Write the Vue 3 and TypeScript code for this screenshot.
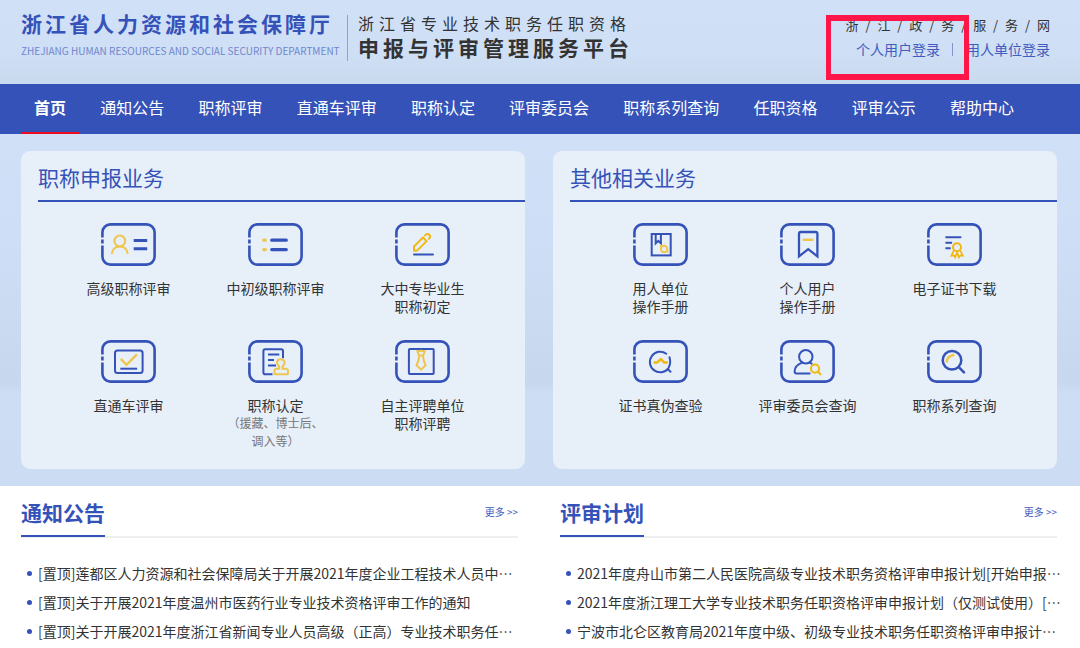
<script setup lang="ts">
interface Service {
  id: string
  lines: string[]
  note?: string[]
}
interface Panel {
  title: string
  services: Service[]
}
interface Board {
  title: string
  items: string[]
}

const navItems: string[] = [
  '首页', '通知公告', '职称评审', '直通车评审', '职称认定',
  '评审委员会', '职称系列查询', '任职资格', '评审公示', '帮助中心',
]

const panels: Panel[] = [
  {
    title: '职称申报业务',
    services: [
      { id: 'senior', lines: ['高级职称评审'] },
      { id: 'junior', lines: ['中初级职称评审'] },
      { id: 'graduate', lines: ['大中专毕业生', '职称初定'] },
      { id: 'direct', lines: ['直通车评审'] },
      { id: 'confirm', lines: ['职称认定'], note: ['（援藏、博士后、', '调入等）'] },
      { id: 'employer', lines: ['自主评聘单位', '职称评聘'] },
    ],
  },
  {
    title: '其他相关业务',
    services: [
      { id: 'unit-manual', lines: ['用人单位', '操作手册'] },
      { id: 'user-manual', lines: ['个人用户', '操作手册'] },
      { id: 'certificate', lines: ['电子证书下载'] },
      { id: 'verify', lines: ['证书真伪查验'] },
      { id: 'committee', lines: ['评审委员会查询'] },
      { id: 'series', lines: ['职称系列查询'] },
    ],
  },
]

const boards: Board[] = [
  {
    title: '通知公告',
    items: [
      '[置顶]莲都区人力资源和社会保障局关于开展2021年度企业工程技术人员中…',
      '[置顶]关于开展2021年度温州市医药行业专业技术资格评审工作的通知',
      '[置顶]关于开展2021年度浙江省新闻专业人员高级（正高）专业技术职务任…',
    ],
  },
  {
    title: '评审计划',
    items: [
      '2021年度舟山市第二人民医院高级专业技术职务资格评审申报计划[开始申报…',
      '2021年度浙江理工大学专业技术职务任职资格评审申报计划（仅测试使用）[…',
      '宁波市北仑区教育局2021年度中级、初级专业技术职务任职资格评审申报计…',
    ],
  },
]
</script>

<template>
  <div class="page">
    <header class="header">
      <div class="brand">
        <div class="dept">
          <p class="dept-name">浙江省人力资源和社会保障厅</p>
          <p class="dept-en">ZHEJIANG HUMAN RESOURCES AND SOCIAL SECURITY DEPARTMENT</p>
        </div>
        <div class="platform">
          <p class="platform-sub">浙江省专业技术职务任职资格</p>
          <h1 class="platform-name">申报与评审管理服务平台</h1>
        </div>
      </div>
      <div class="account">
        <a class="gov" href="#">浙 / 江 / 政 / 务 / 服 / 务 / 网</a>
        <div class="logins">
          <a href="#">个人用户登录</a>
          <span class="sep"></span>
          <a href="#">用人单位登录</a>
        </div>
      </div>
      <div class="highlight"></div>
    </header>

    <nav class="nav">
      <a v-for="(item, i) in navItems" :key="item" href="#" class="nav-link" :class="{ active: i === 0 }">{{ item }}</a>
    </nav>

    <main>
      <div class="hero">
        <section v-for="panel in panels" :key="panel.title" class="panel">
          <h2 class="panel-title">{{ panel.title }}</h2>
          <div class="services">
            <a v-for="s in panel.services" :key="s.id" href="#" class="service">
              <svg class="icon" viewBox="0 0 55 43" aria-hidden="true">
                <path class="frame" d="M1.4 14.6V9.4a8 8 0 0 1 8-8h36.2a8 8 0 0 1 8 8v24.2a8 8 0 0 1-8 8H9.4a8 8 0 0 1-8-8V22.4M1.4 16.4v4" />
                <g v-if="s.id === 'senior'">
                  <g class="y pale"><circle cx="18.8" cy="18" r="5.4" /><path d="M10.8 31c.4-4.5 3.5-7.6 8-7.6s7.6 3.1 8 7.6" /></g>
                  <path class="b" stroke-width="3" d="M32.7 17.4h13.5M32.7 25.7h13.5" />
                </g>
                <g v-else-if="s.id === 'junior'" class="round">
                  <path class="y pale" stroke-width="3.2" d="M15.7 17.2h1.6M15.7 26.6h1.6" />
                  <path class="b" stroke-width="3.2" d="M23.7 17.2h14.6M23.7 26.6h14.6" />
                </g>
                <g v-else-if="s.id === 'graduate'" class="round">
                  <path class="y" d="M19 27.7v-4.2l9-9 3.6 3.6-8.8 8.8q-1.2 1-3.8.8zM30 12.4c1.6-1.8 3.2-1.7 4.3-.6s1.1 2.6-.4 4.1" />
                  <path class="b" d="M19 31.6h19" />
                </g>
                <g v-else-if="s.id === 'direct'">
                  <rect class="b" x="14" y="10.6" width="27.6" height="22.4" rx="2.5" />
                  <path class="y pale" stroke-width="2.4" d="M19.8 18.8l5.7 6 10.5-10.4" />
                  <path class="b" d="M19.3 28.7h16.8" />
                </g>
                <g v-else-if="s.id === 'confirm'">
                  <path class="b" d="M24.5 34.2H17.2q-1.8 0-1.8-1.8V11q0-1.8 1.8-1.8h16q1.8 0 1.8 1.8v7.2M20 14.4h11.3M20 20h6M20 25.4h8" />
                  <path class="y pale" d="M31.2 28.7v-2.3c-4.2-3.8-1.6-7.1 1.6-7.1s5.8 3.3 1.7 7.1v2.3h3.8q1.7.2 1.7 1.9v2.9q0 .7-.7.7H27.2q-.7 0-.7-.7v-2.9q0-1.7 1.7-1.9z" />
                </g>
                <g v-else-if="s.id === 'employer'">
                  <rect class="b" x="13.9" y="8.9" width="24.8" height="25" rx="1" />
                  <path class="y pale" d="M23.9 15.4l-1.5-4.2q3.6-1 7.4 0l-1.5 4.2zM24.2 15.6q-.2 5-2.6 9.7l4.5 4.4 4.5-4.4q-2.4-4.7-2.6-9.7" />
                </g>
                <g v-else-if="s.id === 'unit-manual'">
                  <rect class="b" x="18.7" y="11" width="19" height="21.4" />
                  <path class="b" d="M22.7 11v9.3l2.5-2.4 2.7 2.4V11" />
                  <circle class="y pale" cx="31.1" cy="26" r="3.2" />
                  <path class="y pale" stroke-width="1.5" d="M27.6 22.3v2M34.7 27.8v2" />
                </g>
                <g v-else-if="s.id === 'user-manual'">
                  <path class="b" stroke-width="2.3" d="M19 33.3V10.8q0-1.8 1.8-1.8h14.8q1.8 0 1.8 1.8v22.5l-9.2-7.2z" />
                  <path class="y pale" stroke-width="2.4" d="M22.7 16.8h10.8" />
                </g>
                <g v-else-if="s.id === 'certificate'">
                  <path class="b" d="M18.4 14.3h15.9M18.4 19.7h6.7M18.4 25.3h5.3" />
                  <g class="y"><circle cx="30" cy="24.3" r="4" /><path stroke-width="1.7" d="M26.8 27.7l-2.4 5 2.5-.3 1.3 2 1.9-5 1.9 5 1.3-2 2.5.3-2.5-5" /></g>
                </g>
                <g v-else-if="s.id === 'verify'" class="round">
                  <path class="b" d="M33.3 13.7A10.3 10.3 0 1 0 35.3 28.3Q38.4 23.5 36.5 17.3M35.2 29.4l2.3 2.3" />
                  <path class="y" stroke-width="2.5" d="M21.6 22.6h2.4l4-3.6 3.2 3.6h2.6" />
                </g>
                <g v-else-if="s.id === 'committee'" class="round">
                  <g class="b"><circle cx="25.8" cy="16.8" r="6.7" /><path d="M22.2 22.6c-5 1.8-7.6 5.6-7.6 9q0 2 2 2h13M29.8 22.6l1.8 1" /></g>
                  <g class="y"><circle cx="35" cy="28.6" r="4.1" /><path d="M38 31.7l2.5 2.5" /></g>
                </g>
                <g v-else class="round">
                  <g class="b" stroke-width="2.5"><circle cx="25" cy="20.3" r="9.3" /><path d="M31.8 27.2l5.2 5.2" /></g>
                  <path class="y pale" stroke-width="2.4" d="M19.7 21.5q.6-5.3 6.8-6.5" />
                </g>
              </svg>
              <span v-for="l in s.lines" :key="l" class="label">{{ l }}</span>
              <span v-for="n in s.note ?? []" :key="n" class="note">{{ n }}</span>
            </a>
          </div>
        </section>
      </div>

      <div class="boards">
        <section v-for="board in boards" :key="board.title" class="board">
          <div class="board-head">
            <h2 class="board-title">{{ board.title }}</h2>
            <a href="#" class="more">更多 &gt;&gt;</a>
          </div>
          <ul class="list">
            <li v-for="item in board.items" :key="item"><a href="#">{{ item }}</a></li>
          </ul>
        </section>
      </div>
    </main>
  </div>
</template>

<style>
body {
  margin: 0;
  background: #fff;
}
</style>

<style scoped>
.page {
  font-family: "Noto Sans CJK SC", "Noto Sans", sans-serif;
  color: #333;
}
a {
  color: inherit;
  text-decoration: none;
}
p, h1, h2, ul {
  margin: 0;
  padding: 0;
}

.header {
  position: relative;
  display: flex;
  justify-content: space-between;
  box-sizing: border-box;
  height: 84px;
  padding: 10px 30px 0 21px;
  background: linear-gradient(#d0e1f7 0%, #cfdff5 60%, #c9d9ee 100%);
}
.brand {
  display: flex;
  white-space: nowrap;
}
.dept {
  box-sizing: border-box;
  width: 326px;
}
.dept-name {
  font-size: 21px;
  line-height: 26px;
  letter-spacing: 3px;
  font-weight: 600;
  color: #3552b8;
}
.dept-en {
  margin-top: 8px;
  font-size: 10px;
  line-height: 14px;
  color: #6f86cd;
}
.platform {
  height: 46px;
  margin-top: 5px;
  padding-left: 10px;
  border-left: 1px solid #8ba3d8;
}
.platform-sub {
  font-size: 16px;
  line-height: 17px;
  letter-spacing: 5px;
}
.platform-name {
  font-size: 21px;
  line-height: 30px;
  letter-spacing: 4px;
  font-weight: 700;
}
.account {
  display: flex;
  flex-direction: column;
  align-items: flex-end;
  padding-top: 5px;
  white-space: nowrap;
}
.gov {
  margin-right: -2px;
  font-size: 13px;
  line-height: 20px;
  letter-spacing: 2px;
}
.logins {
  display: flex;
  align-items: center;
  font-size: 14px;
  line-height: 28px;
  color: #3f5cc0;
}
.sep {
  width: 1px;
  height: 13px;
  margin: 0 13px 0 12px;
  background: #8a92c8;
}
.highlight {
  position: absolute;
  top: 15px;
  right: 111px;
  box-sizing: border-box;
  width: 143px;
  height: 65px;
  border: 6px solid #ff1649;
  border-left-width: 5px;
  border-right-width: 5px;
  pointer-events: none;
}

.nav {
  display: flex;
  justify-content: space-between;
  padding: 0 53px 0 21px;
  background: #3552b8;
  color: #fff;
  white-space: nowrap;
}
.nav-link {
  padding: 0 13px 2px;
  border-bottom: 2px solid transparent;
  font-size: 16px;
  line-height: 46px;
}
.nav-link.active {
  border-bottom-color: #ee0a1c;
  font-weight: 700;
}

.hero {
  display: grid;
  grid-template-columns: 1fr 1fr;
  gap: 28px;
  padding: 17px 23px 17px 21px;
  background: linear-gradient(#d0e0f7 0%, #cddef6 30%, #c7d8ee 70%, #ccddf4 74%, #ccddf3 100%);
}
.panel {
  padding: 0 0 19px 17px;
  border-radius: 9px;
  background: #e7eff9;
}
.panel-title {
  height: 49px;
  border-bottom: 2px solid #3552b8;
  font-size: 21px;
  line-height: 52px;
  font-weight: 400;
  color: #3552b8;
}
.services {
  display: grid;
  grid-template-columns: repeat(3, 1fr);
  align-content: start;
  row-gap: 25px;
  padding: 21px 29px 0 17px;
}
.service {
  display: flex;
  flex-direction: column;
  align-items: center;
  white-space: nowrap;
}
.icon {
  width: 55px;
  height: 43px;
  margin-bottom: 13px;
  fill: none;
  stroke-width: 2;
}
.frame {
  stroke: #3552b8;
  stroke-width: 2.6;
}
.b {
  stroke: #3552b8;
}
.y {
  stroke: #f1b813;
}
.pale {
  stroke: #efc64d;
}
.round {
  stroke-linecap: round;
  stroke-linejoin: round;
}
.label {
  font-size: 14px;
  line-height: 18px;
}
.note {
  font-size: 12px;
  line-height: 18px;
  color: #777;
}

.boards {
  display: grid;
  grid-template-columns: minmax(0, 1fr) minmax(0, 1fr);
  gap: 42px;
  padding: 0 23px 0 21px;
}
.board-head {
  display: flex;
  justify-content: space-between;
  height: 50px;
  border-bottom: 2px solid #eee;
}
.board-title {
  height: 49px;
  border-bottom: 2px solid #3552b8;
  font-size: 21px;
  line-height: 52px;
  font-weight: 700;
  color: #3552b8;
}
.more {
  font-size: 10px;
  line-height: 52px;
  color: #3f5cc0;
}
.list {
  padding-top: 21px;
  list-style: none;
}
.list li {
  display: flex;
  align-items: center;
  padding-left: 6px;
  font-size: 14px;
  line-height: 29px;
  white-space: nowrap;
}
.list li::before {
  content: "";
  flex: none;
  width: 5px;
  height: 5px;
  margin-right: 6px;
  border-radius: 50%;
  background: #3552b8;
}
</style>
